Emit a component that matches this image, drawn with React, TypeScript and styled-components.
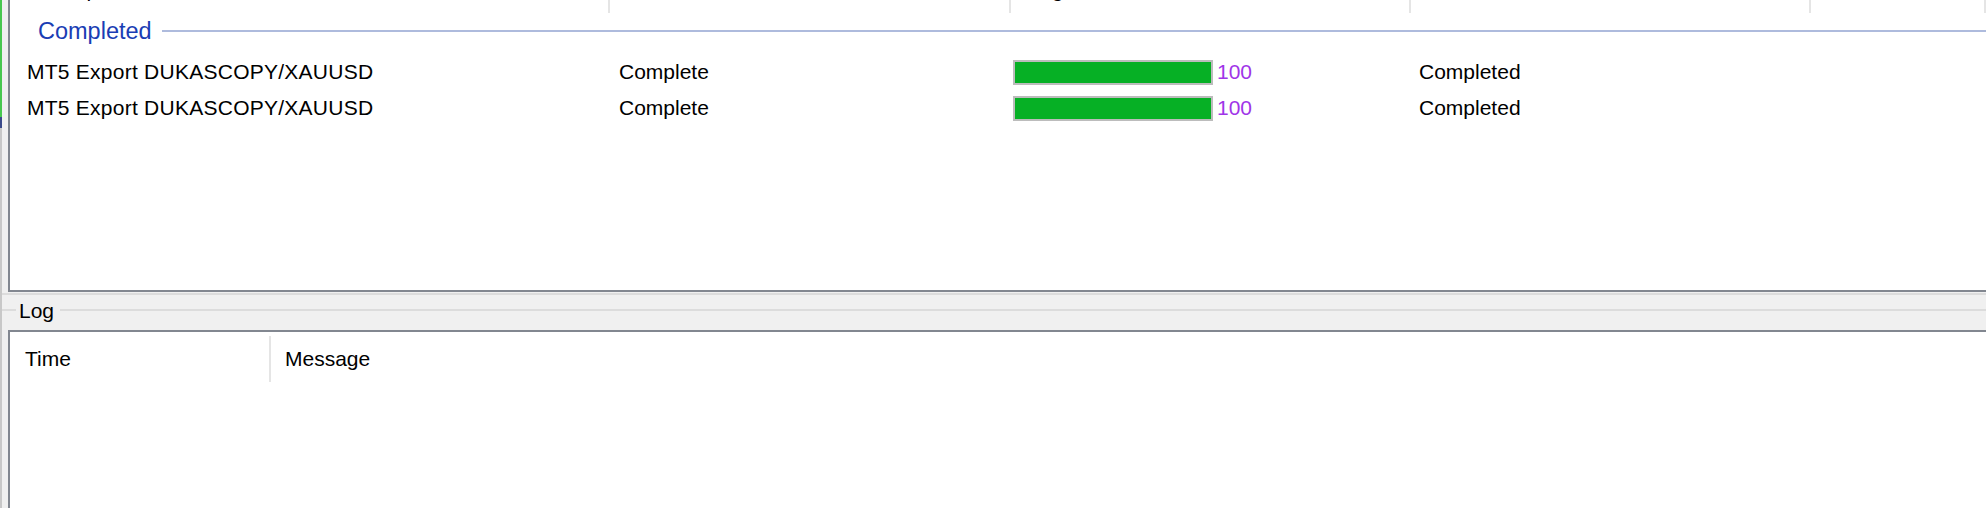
import React from 'react';
import styled, { createGlobalStyle } from 'styled-components';

const GlobalStyle = createGlobalStyle`
  html, body {
    margin: 0;
    padding: 0;
    background: #f0f0f0;
  }
  body {
    font-family: "Liberation Sans", Arial, sans-serif;
    color: #000;
  }
`;

const TASK_COLS = '600px 401px 400px 400px 1fr';

interface Task {
  name: string;
  status: string;
  progress: number;
  details: string;
}

const tasks: Task[] = [
  { name: 'MT5 Export DUKASCOPY/XAUUSD', status: 'Complete', progress: 100, details: 'Completed' },
  { name: 'MT5 Export DUKASCOPY/XAUUSD', status: 'Complete', progress: 100, details: 'Completed' },
];

const Window = styled.div`
  display: flex;
  width: 1986px;
  height: 508px;
  overflow: hidden;
  background: #f0f0f0;
`;

const EdgeStrip = styled.div`
  width: 2px;
  flex-shrink: 0;
  display: flex;
  flex-direction: column;
`;

const EdgePart = styled.div<{ $color: string; $height?: number }>`
  background: ${(p) => p.$color};
  height: ${(p) => (p.$height ? `${p.$height}px` : 'auto')};
  flex: ${(p) => (p.$height ? '0 0 auto' : '1')};
`;

const Main = styled.div`
  flex: 1;
  min-width: 0;
  display: flex;
  flex-direction: column;
`;

const TaskList = styled.div`
  margin-left: 6px;
  height: 292px;
  box-sizing: border-box;
  border: 2px solid #828790;
  border-top: none;
  border-right: none;
  background: #fff;
  overflow: hidden;
  flex-shrink: 0;
`;

const HeaderRow = styled.div`
  display: grid;
  grid-template-columns: ${TASK_COLS};
  height: 40px;
  margin-top: -27px;
`;

const HeaderCell = styled.div<{ $pad: number }>`
  border-right: 2px solid #e5e5e5;
  padding-left: ${(p) => p.$pad}px;
  font-size: 21px;
  line-height: 34px;
  white-space: nowrap;
  overflow: hidden;
`;

const GroupHeader = styled.div`
  display: flex;
  align-items: center;
  gap: 10px;
  height: 36px;
  padding-left: 28px;
`;

const GroupTitle = styled.span`
  font-size: 23.5px;
  color: #1a3db4;
`;

const GroupLine = styled.div`
  flex: 1;
  height: 2px;
  background: #aebbdd;
`;

const Rows = styled.div`
  margin-top: 5px;
`;

const Row = styled.div`
  display: grid;
  grid-template-columns: ${TASK_COLS};
  height: 36px;
  align-items: center;
  font-size: 21px;
`;

const Cell = styled.div<{ $pad: number; $spacing?: number }>`
  padding-left: ${(p) => p.$pad}px;
  letter-spacing: ${(p) => p.$spacing ?? 0}px;
  white-space: nowrap;
`;

const ProgressCell = styled.div`
  display: flex;
  align-items: center;
  gap: 4px;
  padding-left: 2px;
`;

const Bar = styled.div`
  width: 200px;
  height: 25px;
  box-sizing: border-box;
  border: 2px solid #bcbcbc;
  background: #e6e6e6;
`;

const BarFill = styled.div`
  height: 100%;
  background: #06b025;
`;

const Percent = styled.span`
  color: #a035e8;
  font-size: 21px;
`;

const Divider = styled.div`
  height: 2px;
  margin-top: 1px;
  background: #dcdcdc;
  flex-shrink: 0;
`;

const GroupCaption = styled.div`
  display: flex;
  align-items: center;
  height: 30px;
  flex-shrink: 0;
`;

const CaptionLine = styled.div<{ $width?: number }>`
  height: 2px;
  background: #dcdcdc;
  width: ${(p) => (p.$width ? `${p.$width}px` : 'auto')};
  flex: ${(p) => (p.$width ? '0 0 auto' : '1')};
`;

const CaptionText = styled.span`
  font-size: 21px;
  padding: 2px 6px 0 3px;
`;

const LogList = styled.div`
  flex: 1;
  margin: 5px 0 0 6px;
  border: 2px solid #828790;
  border-right: none;
  border-bottom: none;
  background: #fff;
`;

const LogHeader = styled.div`
  display: grid;
  grid-template-columns: 261px 1fr;
  height: 46px;
  margin-top: 4px;
`;

const LogHeaderCell = styled.div<{ $pad: number; $divider?: boolean }>`
  padding-left: ${(p) => p.$pad}px;
  border-right: ${(p) => (p.$divider ? '2px solid #e5e5e5' : 'none')};
  font-size: 21px;
  line-height: 46px;
`;

export default function App() {
  return (
    <>
      <GlobalStyle />
      <Window>
        <EdgeStrip>
          <EdgePart $color="#47c84f" $height={117} />
          <EdgePart $color="#3a4a8a" $height={11} />
          <EdgePart $color="#c8c8c8" />
        </EdgeStrip>
        <Main>
          <TaskList>
            <HeaderRow>
              <HeaderCell $pad={17}>Description</HeaderCell>
              <HeaderCell $pad={9}>Status</HeaderCell>
              <HeaderCell $pad={8}>Progress</HeaderCell>
              <HeaderCell $pad={8}>Details</HeaderCell>
              <HeaderCell $pad={8}></HeaderCell>
            </HeaderRow>
            <GroupHeader>
              <GroupTitle>Completed</GroupTitle>
              <GroupLine />
            </GroupHeader>
            <Rows>
              {tasks.map((t, i) => (
                <Row key={i}>
                  <Cell $pad={17} $spacing={0.25}>{t.name}</Cell>
                  <Cell $pad={9}>{t.status}</Cell>
                  <ProgressCell>
                    <Bar>
                      <BarFill style={{ width: `${t.progress}%` }} />
                    </Bar>
                    <Percent>{t.progress}</Percent>
                  </ProgressCell>
                  <Cell $pad={8}>{t.details}</Cell>
                  <Cell $pad={8}></Cell>
                </Row>
              ))}
            </Rows>
          </TaskList>
          <Divider />
          <GroupCaption>
            <CaptionLine $width={14} />
            <CaptionText>Log</CaptionText>
            <CaptionLine />
          </GroupCaption>
          <LogList>
            <LogHeader>
              <LogHeaderCell $pad={15} $divider>Time</LogHeaderCell>
              <LogHeaderCell $pad={14}>Message</LogHeaderCell>
            </LogHeader>
          </LogList>
        </Main>
      </Window>
    </>
  );
}
